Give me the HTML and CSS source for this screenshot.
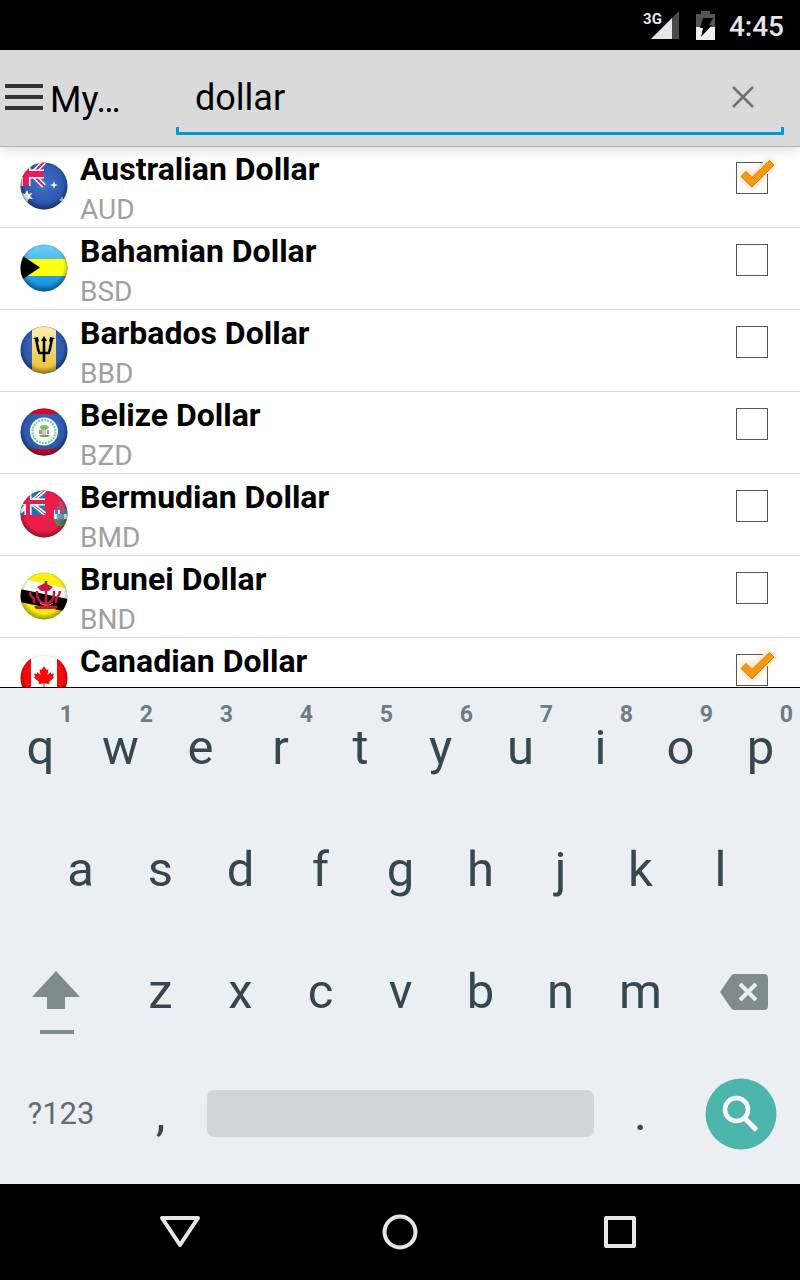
FILE: index.html
```html
<!DOCTYPE html>
<html lang="en">
<head>
    <meta charset="UTF-8">
    <meta name="viewport" content="width=device-width, initial-scale=1.0">
    <title>My Currencies</title>
    <link rel="stylesheet" href="styles.css">
</head>
<body>
    <!-- shared pieces for the flags and check marks -->
    <svg class="defs" width="0" height="0" aria-hidden="true">
        <defs>
            <clipPath id="round"><circle cx="24" cy="24" r="23.5"/></clipPath>
            <radialGradient id="shade" cx="50%" cy="45%" r="55%">
                <stop offset="0.75" stop-color="#000" stop-opacity="0"/>
                <stop offset="1" stop-color="#000" stop-opacity="0.4"/>
            </radialGradient>
            <linearGradient id="gold" x1="0" y1="0" x2="0" y2="1">
                <stop offset="0" stop-color="#fff0b0"/>
                <stop offset="1" stop-color="#e8bc30"/>
            </linearGradient>
            <linearGradient id="aqua" x1="0" y1="0" x2="0" y2="1">
                <stop offset="0" stop-color="#6fd0f8"/>
                <stop offset="1" stop-color="#0a86d8"/>
            </linearGradient>
            <radialGradient id="navy" cx="50%" cy="45%" r="55%">
                <stop offset="0" stop-color="#4470c8"/>
                <stop offset="1" stop-color="#2450a4"/>
            </radialGradient>
            <filter id="glow" x="-50%" y="-50%" width="200%" height="200%">
                <feGaussianBlur stdDeviation="3"/>
            </filter>
            <g id="gloss"><circle cx="24" cy="24" r="23.5" fill="url(#shade)"/></g>
            <g id="tick">
                <path d="M27-1h7v13h-7z" fill="#fff"/>
                <path d="M5 14l5-5 6 6L33-2l5 5-22 22z" fill="#ffb040" stroke="#ffb040" stroke-width="3" opacity="0.55" filter="url(#glow)"/>
                <path d="M5 14.500l5-5 6 6L33.500-1.500l4.500 4.500-22 22z" fill="#ff9800" stroke="#a08868" stroke-width="1"/>
            </g>
        </defs>
    </svg>

    <header class="status-bar">
        <span class="signal">
            <span class="network">3G</span>
            <svg width="28" height="28" viewBox="0 0 28 28"><path d="M28 0v28H0z" fill="#4a4a4a"/><path d="M21 7v21H0z" fill="#e6e6e6"/></svg>
        </span>
        <svg class="battery" width="19" height="29" viewBox="0 0 19 29">
            <path d="M5 0h9v3h5v13H0V3h5z" fill="#555"/>
            <path d="M0 16h19v13H0z" fill="#eee"/>
            <path d="M7 7h10l-4 7h3L5 26l2-9H4z" fill="#000"/>
        </svg>
        <span class="clock">4:45</span>
    </header>

    <div class="action-bar">
        <button class="menu" type="button" aria-label="Menu">
            <svg width="38" height="26" viewBox="0 0 38 26"><path d="M0 2h38M0 13h38M0 24h38" stroke="#333" stroke-width="4"/></svg>
        </button>
        <h1 class="title">My…</h1>
        <div class="search">
            <input type="text" id="search" value="dollar" aria-label="Search currencies">
            <button class="clear" type="button" aria-label="Clear">
                <svg width="22" height="22" viewBox="0 0 22 22"><path d="M1 1l20 20M21 1L1 21" stroke="#707070" stroke-width="2.500"/></svg>
            </button>
        </div>
    </div>

    <ul class="currencies">
        <li>
            <svg class="flag" viewBox="0 0 48 48"><g clip-path="url(#round)">
                <path d="M0 0h48v48H0z" fill="url(#navy)"/>
                <path d="M0 0l24 24M24 0L3 21" stroke="#fff" stroke-width="5"/>
                <path d="M10 10l14 14M24 0L12 12" stroke="#f01858" stroke-width="2"/>
                <path d="M0 12h24M6 0v24" stroke="#fff" stroke-width="9"/>
                <path d="M0 12h24M6 0v24" stroke="#f01858" stroke-width="6"/>
                <path d="M7 28l1.500 4 4-1-2.500 3 3 3-4-.5L7 41l-2-4-4 1 2.500-4L1 31l4 1z" fill="#fff"/>
                <path d="M34 19l1 3 3 1-3 1-1 3-1-3-3-1 3-1zM42 34l1 3 3 1-3 1-1 3-1-3-2-1 2-1z" fill="#fff"/>
            </g><use href="#gloss"/></svg>
            <div class="text">
                <label class="name" for="aud">Australian Dollar</label>
                <span class="code">AUD</span>
            </div>
            <span class="check"><input type="checkbox" id="aud" checked><svg viewBox="-6 -8 52 52"><use href="#tick"/></svg></span>
        </li>
        <li>
            <svg class="flag" viewBox="0 0 48 48"><g clip-path="url(#round)">
                <path d="M0 0h48v48H0z" fill="url(#aqua)"/>
                <path d="M0 15h48v17H0z" fill="#ffff10"/>
                <path d="M0 10v27l20-13.500z" fill="#000"/>
            </g><use href="#gloss"/></svg>
            <div class="text">
                <label class="name" for="bsd">Bahamian Dollar</label>
                <span class="code">BSD</span>
            </div>
            <span class="check"><input type="checkbox" id="bsd"><svg viewBox="-6 -8 52 52"><use href="#tick"/></svg></span>
        </li>
        <li>
            <svg class="flag" viewBox="0 0 48 48"><g clip-path="url(#round)">
                <path d="M0 0h48v48H0z" fill="url(#navy)"/>
                <path d="M12 0h24v48H12z" fill="url(#gold)"/>
                <path d="M24 13v23M15.500 13c2 3 2 11 4 14h9c2-3 2-11 4-14" fill="none" stroke="#000" stroke-width="2.500"/>
                <path d="M13 12l5-1 1 5zM35 12l-5-1-1 5zM24 10l3 5h-6z" fill="#000"/>
            </g><use href="#gloss"/></svg>
            <div class="text">
                <label class="name" for="bbd">Barbados Dollar</label>
                <span class="code">BBD</span>
            </div>
            <span class="check"><input type="checkbox" id="bbd"><svg viewBox="-6 -8 52 52"><use href="#tick"/></svg></span>
        </li>
        <li>
            <svg class="flag" viewBox="0 0 48 48"><g clip-path="url(#round)">
                <path d="M0 0h48v48H0z" fill="url(#navy)"/>
                <path d="M0 0h48v6H0zM0 41h48v7H0z" fill="#d80828"/>
                <circle cx="24" cy="23.500" r="14" fill="#fff"/>
                <circle cx="24" cy="23.500" r="11.500" fill="none" stroke="#58d890" stroke-width="2" stroke-dasharray="2 1"/>
                <path d="M20 20q0-3 4-3t5 3l-3 2h-4z" fill="#78b878"/>
                <path d="M19 22h3v4h-3zM27 22h2v4h-2z" fill="#b09880"/>
                <path d="M22 22h4v5h-4z" fill="#e8c8a8"/>
                <path d="M19 27h11l-2 2h-7z" fill="#58b070"/>
            </g><use href="#gloss"/></svg>
            <div class="text">
                <label class="name" for="bzd">Belize Dollar</label>
                <span class="code">BZD</span>
            </div>
            <span class="check"><input type="checkbox" id="bzd"><svg viewBox="-6 -8 52 52"><use href="#tick"/></svg></span>
        </li>
        <li>
            <svg class="flag" viewBox="0 0 48 48"><g clip-path="url(#round)">
                <path d="M0 0h48v48H0z" fill="#ec1c48"/>
                <path d="M0 0h25v25H0z" fill="#1878c0"/>
                <path d="M0 4l25 20M25 0L0 22" stroke="#fff" stroke-width="4"/>
                <path d="M12 14l13 10M25 0L12 11" stroke="#ec1c48" stroke-width="1"/>
                <path d="M0 12h25M8 0v25" stroke="#fff" stroke-width="7"/>
                <path d="M0 12h25M8 0v25" stroke="#ec1c48" stroke-width="4"/>
                <path d="M34 20h13v8c0 4-3 7-6 8-4-1-7-4-7-8z" fill="#d8e8f0"/>
                <path d="M34 29h13c-1 4-3 6-6 7-4-1-6-3-7-7z" fill="#289850"/>
                <path d="M35 19h3v5h-3zM43 19h4v5h-4z" fill="#3088c8"/>
                <path d="M37 24h7v6h-7z" fill="#50a0c8"/>
                <path d="M39 11h4v5h2v4h-8v-4h2z" fill="#b05068"/>
                <path d="M40 20h3v4h-3zM39 29h4v3h-4z" fill="#d83848"/>
            </g><use href="#gloss"/></svg>
            <div class="text">
                <label class="name" for="bmd">Bermudian Dollar</label>
                <span class="code">BMD</span>
            </div>
            <span class="check"><input type="checkbox" id="bmd"><svg viewBox="-6 -8 52 52"><use href="#tick"/></svg></span>
        </li>
        <li>
            <svg class="flag" viewBox="0 0 48 48"><g clip-path="url(#round)">
                <path d="M0 0h48v48H0z" fill="#fcf010"/>
                <path d="M0 6l48 11v12L0 18z" fill="#fff"/>
                <path d="M0 17l48 10v13L0 30z" fill="#000"/>
                <g fill="none" stroke="#c81848" stroke-width="2.500">
                    <path d="M26 9v24M17 19c-1 17 18 17 17 0M17 35h18"/>
                    <path d="M10 20c0 4 2 5 4 7v4M40 19c0 4-2 5-4 8v4"/>
                </g>
                <path d="M17 15l8-4 8 4-4 4h-8zM14 34h24l-2 3H16z" fill="#c81848"/>
                <path d="M20 31c4 3 9 3 13 0" fill="none" stroke="#f8a018" stroke-width="1"/>
            </g><use href="#gloss"/></svg>
            <div class="text">
                <label class="name" for="bnd">Brunei Dollar</label>
                <span class="code">BND</span>
            </div>
            <span class="check"><input type="checkbox" id="bnd"><svg viewBox="-6 -8 52 52"><use href="#tick"/></svg></span>
        </li>
        <li>
            <svg class="flag" viewBox="0 0 48 48"><g clip-path="url(#round)">
                <path d="M0 0h48v48H0z" fill="#fff"/>
                <path d="M0 0h11v48H0zM37 0h11v48H37z" fill="#f80808"/>
                <path d="M24 12l2.500 4 2-1-1 6 3-3 .5 2 3-.5-1 3 1 1-5 4.500.5 2-5-.5V33h-1v-3.500l-5 .5.500-2-5-4.500 1-1-1-3 3 .5.500-2 3 3-1-6 2 1z" fill="#f80808"/>
            </g><use href="#gloss"/></svg>
            <div class="text">
                <label class="name" for="cad">Canadian Dollar</label>
            </div>
            <span class="check"><input type="checkbox" id="cad" checked><svg viewBox="-6 -8 52 52"><use href="#tick"/></svg></span>
        </li>
    </ul>

    <div class="keyboard">
        <div class="keys">
            <button type="button">q<small>1</small></button>
            <button type="button">w<small>2</small></button>
            <button type="button">e<small>3</small></button>
            <button type="button">r<small>4</small></button>
            <button type="button">t<small>5</small></button>
            <button type="button">y<small>6</small></button>
            <button type="button">u<small>7</small></button>
            <button type="button">i<small>8</small></button>
            <button type="button">o<small>9</small></button>
            <button type="button">p<small>0</small></button>
        </div>
        <div class="keys">
            <button type="button" class="indent">a</button>
            <button type="button">s</button>
            <button type="button">d</button>
            <button type="button">f</button>
            <button type="button">g</button>
            <button type="button">h</button>
            <button type="button">j</button>
            <button type="button">k</button>
            <button type="button">l</button>
        </div>
        <div class="keys">
            <button type="button" class="wide shift" aria-label="Shift">
                <svg width="48" height="64" viewBox="0 0 48 64"><path d="M24 0l24 26H33v12H15V26H0z" fill="#808b8f"/><path d="M8 59h34v4H8z" fill="#808b8f"/></svg>
            </button>
            <button type="button">z</button>
            <button type="button">x</button>
            <button type="button">c</button>
            <button type="button">v</button>
            <button type="button">b</button>
            <button type="button">n</button>
            <button type="button">m</button>
            <button type="button" class="wide backspace" aria-label="Backspace">
                <svg width="48" height="36" viewBox="0 0 48 36"><path d="M14 0h30q4 0 4 4v28q0 4-4 4H14q-2 0-3-2L0 18 11 2q1-2 3-2z" fill="#808b8f"/><path d="M20 10l16 16M36 10L20 26" stroke="#ebeff2" stroke-width="4"/></svg>
            </button>
        </div>
        <div class="keys">
            <button type="button" class="wide symbols">?123</button>
            <button type="button">,</button>
            <button type="button" class="space" aria-label="Space"></button>
            <button type="button">.</button>
            <button type="button" class="wide" aria-label="Search">
                <svg width="72" height="72" viewBox="0 0 72 72"><circle cx="36" cy="36" r="35.500" fill="#4db6ac"/><circle cx="31.500" cy="31.500" r="11.500" fill="none" stroke="#fff" stroke-width="4.500"/><path d="M39.500 40L51.500 52" stroke="#fff" stroke-width="5"/></svg>
            </button>
        </div>
    </div>

    <nav class="nav-bar">
        <button type="button" aria-label="Back">
            <svg width="42" height="36" viewBox="0 0 42 36"><path d="M3 4h36L21 31z" fill="none" stroke="#e6e6e6" stroke-width="4" stroke-linejoin="round"/></svg>
        </button>
        <button type="button" aria-label="Home">
            <svg width="36" height="36" viewBox="0 0 36 36"><circle cx="18" cy="18" r="15.500" fill="none" stroke="#e6e6e6" stroke-width="4"/></svg>
        </button>
        <button type="button" aria-label="Recent apps">
            <svg width="36" height="36" viewBox="0 0 36 36"><path d="M4 4h28v28H4z" fill="none" stroke="#e6e6e6" stroke-width="4" stroke-linejoin="round"/></svg>
        </button>
    </nav>
</body>
</html>
```
FILE: styles.css
```css
* {
    box-sizing: border-box;
}

body {
    font-family: Roboto, sans-serif;
    margin: 0;
    height: 100vh;
    display: flex;
    flex-direction: column;
    background-color: #fff;
    color: #000;
}

button {
    border: none;
    background: none;
    padding: 0;
    font-family: inherit;
    color: inherit;
}

svg {
    display: block;
}

.defs {
    position: absolute;
}

.status-bar {
    flex: none;
    height: 50px;
    padding: 0 16px;
    display: flex;
    justify-content: flex-end;
    align-items: center;
    background-color: #000;
    color: #e6e6e6;
}

.signal {
    position: relative;
    margin-right: 17px;
}

.network {
    position: absolute;
    right: 17px;
    top: -1px;
    font-size: 15px;
    font-weight: 700;
    line-height: 18px;
}

.battery {
    margin-right: 14px;
}

.clock {
    font-size: 28px;
    font-weight: 500;
    line-height: 32px;
    padding-top: 4px;
}

.action-bar {
    flex: none;
    position: relative;
    height: 97px;
    padding: 0 16px 0 5px;
    display: flex;
    align-items: center;
    background-color: #dadada;
    border-bottom: 1px solid #b4b4b4;
    box-shadow: 0 2px 12px rgba(0, 0, 0, 0.16);
}

.menu {
    margin-right: 7px;
    padding-bottom: 2px;
}

.title {
    width: 126px;
    margin: 0;
    padding-top: 4px;
    font-size: 36px;
    font-weight: 400;
    line-height: 42px;
}

.search {
    flex: 1;
    display: flex;
    align-items: center;
    height: 74px;
    padding: 0 30px 0 19px;
    border-bottom: 3px solid #0099cc;
    background: linear-gradient(#0099cc, #0099cc) left bottom / 3px 5px no-repeat,
        linear-gradient(#0099cc, #0099cc) right bottom / 3px 5px no-repeat;
}

.search input {
    flex: 1;
    min-width: 0;
    padding: 2px 0 0;
    border: none;
    outline: none;
    background: none;
    font-family: inherit;
    font-size: 36px;
    line-height: 42px;
    color: #000;
}

.currencies {
    flex: 1;
    min-height: 0;
    overflow: hidden;
    list-style-type: none;
    margin: -1px 0 0;
    padding: 0;
}

.currencies li {
    display: flex;
    align-items: flex-start;
    height: 82px;
    padding: 1px 32px 0 20px;
    border-bottom: 1px solid #d8d8d8;
}

.flag {
    width: 48px;
    height: 48px;
    margin: 15px 12px 0 0;
}

.text {
    flex: 1;
    display: flex;
    flex-direction: column;
}

.name {
    font-size: 32px;
    font-weight: 700;
    line-height: 44px;
}

.code {
    font-size: 28px;
    line-height: 38px;
    color: #a0a0a0;
}

.check {
    position: relative;
    margin-top: 15px;
}

.check input {
    appearance: none;
    display: block;
    width: 32px;
    height: 32px;
    margin: 0;
    border: 1px solid #555;
    background-color: #fff;
}

/* the tick hangs over the corner of its box */
.check svg {
    display: none;
    position: absolute;
    left: -6px;
    top: -8px;
    width: 52px;
    height: 52px;
    overflow: visible;
    pointer-events: none;
}

.check input:checked + svg {
    display: block;
}

.keyboard {
    flex: none;
    padding-bottom: 8px;
    border-top: 1px solid #000;
    background-color: #ebeff2;
    color: #37474f;
}

.keys {
    display: grid;
    grid-template-columns: repeat(20, 1fr);
    grid-auto-rows: 122px;
}

.keys button {
    grid-column: span 2;
    position: relative;
    display: flex;
    justify-content: center;
    align-items: center;
    padding: 0 0 3px 1px;
    font-size: 49px;
    line-height: 58px;
}

.keys .indent {
    grid-column: 2 / span 2;
}

.keys .wide {
    grid-column: span 3;
}

.keys small {
    position: absolute;
    top: 13px;
    right: 7px;
    font-size: 23px;
    font-weight: 700;
    line-height: 28px;
    color: #6f7c81;
}

.keys .shift {
    padding: 20px 8px 0 0;
}

.keys .backspace {
    padding-left: 8px;
}

.keys .symbols {
    padding-left: 2px;
    font-size: 31px;
    color: #5f6d73;
}

.keys .space {
    grid-column: span 10;
    align-self: center;
    height: 47px;
    margin: 0 6px 4px 7px;
    border-radius: 7px;
    background-color: #d0d5d8;
}

.nav-bar {
    flex: none;
    height: 96px;
    display: flex;
    justify-content: center;
    align-items: center;
    background-color: #000;
}

.nav-bar button {
    width: 220px;
    display: flex;
    justify-content: center;
}
```
